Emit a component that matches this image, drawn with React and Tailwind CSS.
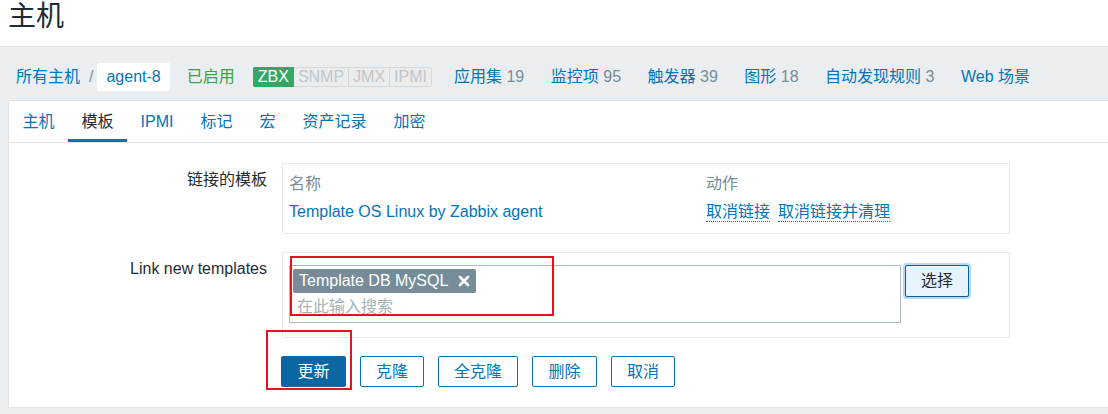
const font = "font-['Liberation_Sans','Noto_Sans_CJK_SC',sans-serif]";

function CloseMark() {
  return (
    <svg width="12" height="12" viewBox="0 0 12 12" className="shrink-0">
      <path d="M2 2 L10 10 M10 2 L2 10" stroke="#fff" strokeWidth="2.6" strokeLinecap="round" />
    </svg>
  );
}

export default function App() {
  const tabs = ['主机', '模板', 'IPMI', '标记', '宏', '资产记录', '加密'];
  const counters = [
    ['应用集', '19'],
    ['监控项', '95'],
    ['触发器', '39'],
    ['图形', '18'],
    ['自动发现规则', '3'],
    ['Web 场景', null],
  ];

  return (
    <div className={`w-[1108px] h-[414px] overflow-hidden bg-[#ebeef0] text-[16px] text-[#1f2c33] ${font}`}>
      {/* page header */}
      <header className="h-[47px] bg-white border-b border-[#dfe4e7] px-2">
        <h1 className="text-[28px] leading-[34px] font-normal">主机</h1>
      </header>

      {/* host breadcrumb */}
      <nav className="flex items-center h-[28px] mt-[16px] mb-[9px] pl-4 leading-[20px] whitespace-nowrap">
        <span className="text-[#0275b8]">所有主机</span>
        <span className="ml-[9px] mr-[4px] text-[#768d99]">/</span>
        <span className="h-[28px] px-[9px] flex items-center bg-white rounded-[2px] text-[#0275b8]">agent-8</span>
        <span className="ml-[17px] text-[#429e47]">已启用</span>
        <div className="ml-[18px] flex h-[20px] leading-[18px] rounded-[2px] overflow-hidden">
          <span className="px-[4px] bg-[#35a765] border border-[#35a765] text-white">ZBX</span>
          <span className="px-[4px] bg-[#ececec] border border-l-0 border-[#d3dadd] text-[#bfc8cd]">SNMP</span>
          <span className="px-[4px] bg-[#ececec] border border-l-0 border-[#d3dadd] text-[#bfc8cd]">JMX</span>
          <span className="px-[4px] bg-[#ececec] border border-l-0 border-[#d3dadd] text-[#bfc8cd] rounded-r-[2px]">IPMI</span>
        </div>
        <div className="ml-[22px] flex gap-[26.5px]">
          {counters.map(([name, n]) => (
            <span key={name} className="text-[#0275b8]">
              {name}
              {n && <span className="text-[#768d99]"> {n}</span>}
            </span>
          ))}
        </div>
      </nav>

      {/* main card */}
      <div className="ml-2 h-[308px] bg-white border-t border-l border-b border-[#dfe4e7]">
        <ul className="flex h-[42px] border-b border-[#dfe4e7]">
          {tabs.map((t) => (
            <li
              key={t}
              className={`px-[13.5px] h-[41px] flex items-center ${
                t === '模板' ? 'border-b-[3px] border-[#0275b8] pt-[3px] text-[#1f2c33]' : 'text-[#0275b8]'
              }`}
            >
              {t}
            </li>
          ))}
        </ul>

        <div className="pt-[20px]">
          {/* linked templates */}
          <div className="flex">
            <div className="w-[273px] pr-[15px] pt-[7px] text-right leading-[20px]">链接的模板</div>
            <div className="w-[728px] border border-[#e5e9eb] pt-[6px] px-[6px] pb-[7px] leading-[20px]">
              <div className="flex h-[28px] items-center text-[#768d99]">
                <div className="w-[417px]">名称</div>
                <div>动作</div>
              </div>
              <div className="flex h-[28px] items-center">
                <div className="w-[417px] text-[#0275b8]">Template OS Linux by Zabbix agent</div>
                <div className="flex gap-[8px] text-[#0275b8]">
                  <span className="border-b border-dotted border-[#0275b8] leading-[19px]">取消链接</span>
                  <span className="border-b border-dotted border-[#0275b8] leading-[19px]">取消链接并清理</span>
                </div>
              </div>
            </div>
          </div>

          {/* link new templates */}
          <div className="flex mt-[18px]">
            <div className="w-[273px] pr-[15px] pt-[7px] text-right leading-[20px]">Link new templates</div>
            <div className="w-[728px] border border-[#e5e9eb] pt-[12px] px-[6px] pb-[14px] flex items-start">
              <div className="relative w-[612px] h-[58px] border border-[#acbbc2]">
                <div className="mt-[3px] ml-[3px] inline-flex items-center h-[24px] pl-[6px] pr-[6px] gap-[10px] bg-[#768d99] rounded-[2px] text-white leading-[20px]">
                  <span>Template DB MySQL</span>
                  <CloseMark />
                </div>
                <div className="mt-[4px] pl-[7px] leading-[20px] text-[#a5b1b8]">在此输入搜索</div>
                <div className="absolute left-0 top-[-10px] w-[264px] h-[60px] border-2 border-[#e5131d]" />
              </div>
              <button className="ml-[4px] w-[64px] h-[32px] rounded-[2px] border border-[#0b5e98] bg-[#e6f2fc] shadow-[0_0_0_2px_#b9d9f3] text-[#1f2c33] leading-[20px]">
                选择
              </button>
            </div>
          </div>

          {/* actions */}
          <div className="flex gap-[14px] mt-[18px] pl-[272px] leading-[20px]">
            <div className="relative">
              <button className="w-[65px] h-[31px] rounded-[2px] bg-[#0a67a3] text-white">更新</button>
              <div className="absolute left-[-15px] top-[-26px] w-[86px] h-[60px] border-2 border-[#e5131d]" />
            </div>
            <button className="w-[64px] h-[31px] rounded-[2px] border border-[#0275b8] text-[#0275b8]">克隆</button>
            <button className="w-[80px] h-[31px] rounded-[2px] border border-[#0275b8] text-[#0275b8]">全克隆</button>
            <button className="w-[65px] h-[31px] rounded-[2px] border border-[#0275b8] text-[#0275b8]">删除</button>
            <button className="w-[64px] h-[31px] rounded-[2px] border border-[#0275b8] text-[#0275b8]">取消</button>
          </div>
        </div>
      </div>
    </div>
  );
}
